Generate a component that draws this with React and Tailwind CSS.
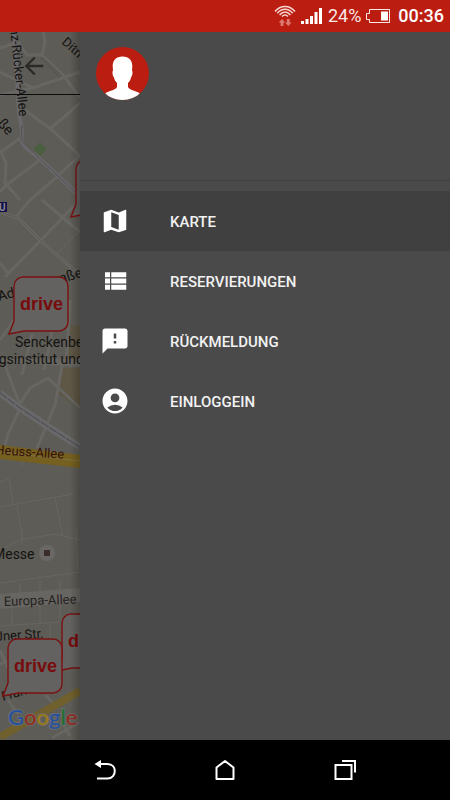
import React, { useState } from 'react';
import { MdArrowBack, MdMap, MdFeedback, MdAccountCircle } from 'react-icons/md';

function ViewListIcon(props) {
    return (
        <svg viewBox="0 0 24 24" fill="currentColor" {...props}>
            <path d="M4 14h4v-4H4v4zm0 5h4v-4H4v4zM4 9h4V5H4v4zm5 5h12v-4H9v4zm0 5h12v-4H9v4zM9 5v4h12V5H9z" />
        </svg>
    );
}

const items = [
    { id: 'map', label: 'KARTE', Icon: MdMap },
    { id: 'reservations', label: 'RESERVIERUNGEN', Icon: ViewListIcon },
    { id: 'feedback', label: 'RÜCKMELDUNG', Icon: MdFeedback },
    { id: 'login', label: 'EINLOGGEIN', Icon: MdAccountCircle },
];

function StatusBar() {
    return (
        <header className="flex h-8 items-center justify-end bg-[#bb1e11] pr-[6px] text-[18px] leading-8 text-[#fbe9e7]">
            <svg className="mr-1 h-6 w-6" viewBox="0 0 24 24" fill="none" stroke="#f6d5d1" strokeWidth="1.5">
                <path d="M2 7.500C7.500 .8 16.500 .8 22 7.500" />
                <path d="M4.300 9.300C8.800 4 15.200 4 19.700 9.300" />
                <path d="M6.600 11C10 7 14 7 17.400 11" />
                <path d="M9 12.600C11 10.500 13 10.500 15 12.600" />
                <g fill="#df7a70" stroke="none">
                    <path d="M9 15l3.300 3.500h-1.900V22H7.600v-3.500H5.700z" />
                    <path d="M15.300 22l-3.300-3.500h1.900V15h2.800v3.500h1.900z" />
                </g>
            </svg>
            <svg className="mr-[6px] h-4 w-[21px]" viewBox="0 0 21 16" fill="#fff">
                <path d="M0 13h3v3H0zM4.500 11h3v5h-3zM9 8h3v8H9zM13.500 4h3v12h-3zM18 0h3v16h-3z" />
            </svg>
            <span>24%</span>
            <svg className="mr-2 ml-[5px] h-[14px] w-6" viewBox="0 0 24 14" fill="none" stroke="#fbe9e7">
                <path d="M3.500 .5H23.500V13.500H3.500V10.500H.500V4.500H3.500Z" />
                <path d="M15 2.500h7v9h-7z" fill="#fff" stroke="none" />
            </svg>
            <span className="font-medium text-white">00:36</span>
        </header>
    );
}

function Pin({ x, y }) {
    return (
        <g transform={`translate(${x} ${y})`}>
            <path
                d="M9 0H45A9 9 0 0 1 54 9V45A9 9 0 0 1 45 54H10L-5 57L0 44V9A9 9 0 0 1 9 0Z"
                fill="#636261"
                stroke="#7a1010"
                strokeWidth="1.4"
            />
            <text x="6" y="33" fontSize="18" fontWeight="700" fill="#780c0c" fontFamily="Liberation Sans, sans-serif">
                drive
            </text>
        </g>
    );
}

function CityMap() {
    return (
        <svg className="block h-[708px] w-20" viewBox="0 32 80 708" fontFamily="Roboto, sans-serif">
            <defs>
                <linearGradient id="edge">
                    <stop offset="0" stopColor="#000" stopOpacity="0" />
                    <stop offset="1" stopColor="#000" stopOpacity="0.22" />
                </linearGradient>
            </defs>
            <rect y="32" width="80" height="708" fill="#5e5c56" />

            {/* blocks and parks */}
            <path d="M33 149L40 142L47 149L40 156Z" fill="#4b5f40" />
            <path d="M62 368H80V410L57 392Z" fill="#5f5746" />
            <path d="M70 325h10v34H68z" fill="#5f5746" />

            {/* side streets */}
            <g fill="none" stroke="#686662" strokeWidth="3">
                <path d="M43 30L45 43L42 55L27 55L18 42M42 55L63 75L80 98" />
                <path d="M18 42L0 48M0 72L33 88L80 72M0 95L33 88" />
                <path d="M25 110L52 130L80 156M50 129L80 103" />
                <path d="M0 153L20 138M0 150L6 163L5 183L20 200" />
                <path d="M58 176L80 155M40 160L5 186L0 192M58 176L30 200L15 218" />
                <path d="M42 200L80 232M5 277L70 210L80 200M0 263L8 273" />
                <path d="M0 340L14 320M32 334L22 375M52 332L44 370M70 300L66 365" />
                <path d="M5 365L20 405M20 404L30 388L48 378L80 408M62 366L55 405L37 448M20 408L8 434L5 446" />
            </g>
            <g fill="none" stroke="#686661" strokeWidth="1">
                <path d="M57 254L80 230" />
                <path d="M0 482L9 479L13 503M0 507L73 494M17 505L23 540M55 498L63 537M22 460V466" />
                <path d="M0 550L20 540L55 534L80 540M22 545V530M20 583V598M40 580V622M60 580V620M0 583L80 572M76 530L78 570" />
                <path d="M0 626L60 622M12 600V625M50 622V640" />
            </g>
            <path d="M0 650L8 668M0 664L8 661M45 695L54 704M8 700L18 714M52 738L80 722M62 722L70 736" fill="none" stroke="#686662" strokeWidth="3" />

            {/* tram and railway */}
            <path d="M14 32L19 113L22 130L21 140L25 147L40 159L58 176L76 193" fill="none" stroke="#68686c" strokeWidth="4" />
            <path d="M22 125L21 140L40 159L58 176L76 193" fill="none" stroke="#54534f" strokeWidth="1" />
            <path d="M0 212L18 218L40 240L57 255L80 275" fill="none" stroke="#6b6a66" strokeWidth="3" />
            <path d="M0 212L18 218L40 240L57 255L80 275" fill="none" stroke="#5a5853" strokeWidth="1" />
            <path d="M40 57L60 78M42 57L62 76" fill="none" stroke="#4d4b45" strokeWidth="0.6" />
            <path d="M0 393L20 408L50 428L80 447" fill="none" stroke="#68686a" strokeWidth="7" />
            <path d="M0 393L20 408L50 428L80 447" fill="none" stroke="#484848" strokeWidth="1" strokeDasharray="9 1" />
            <path d="M0 359H80V367L0 362Z" fill="#686661" />

            {/* main roads */}
            <path d="M0 445L80 455V468L0 459Z" fill="#75601f" />
            <path d="M0 452L80 461" stroke="#7f7040" strokeWidth="1" />
            <path d="M0 594L80 588V602L0 609Z" fill="#686662" />
            <path d="M0 737L80 691" stroke="#6f602e" strokeWidth="8" />

            <g fontSize="14" fill="#141312">
                <text fontSize="13" transform="translate(61 43) rotate(42)">Ditm</text>
                <text fontSize="13" transform="translate(10 28) rotate(84)">nz-Rücker-Allee</text>
                <text fontSize="14" transform="translate(-3 124) rotate(48)">ße</text>
                <text fontSize="14" transform="translate(-1 301) rotate(-14)">Ad</text>
                <text fontSize="14" transform="translate(52 286) rotate(-17)">traße</text>
                <text x="15" y="347">Senckenbe</text>
                <text x="-9" y="364">ngsinstitut und</text>
                <text fontSize="13" fill="#35120b" transform="translate(-5 454) rotate(4)">Heuss-Allee</text>
                <text x="-7" y="559">Messe</text>
                <text fontSize="13" fill="#242220" transform="translate(4 606) rotate(-2)">Europa-Allee</text>
                <text fontSize="13" transform="translate(-4 641) rotate(-4)">Jner Str.</text>
                <text fontSize="13" transform="translate(3 701) rotate(-16)">Fran</text>
            </g>
            <rect x="-4" y="202" width="11" height="10" fill="#10104a" />
            <text x="-1" y="211" fontSize="10" fontWeight="700" fill="#8a8a92">U</text>
            <circle cx="47" cy="553" r="8" fill="#6a6866" />
            <rect x="44" y="550" width="6" height="6" fill="#3a2c28" />

            <Pin x={76} y={160} />
            <Pin x={14} y={277} />
            <Pin x={62} y={614} />
            <Pin x={8} y={639} />

            <text
                x="8"
                y="725"
                fontSize="22"
                fontFamily="Lato, sans-serif"
                fontWeight="500"
                stroke="#6c6b68"
                strokeWidth="2"
                paintOrder="stroke"
            >
                <tspan fill="#2552a0" stroke="#6c6b68">G</tspan>
                <tspan fill="#942a20">o</tspan>
                <tspan fill="#9c7a12">o</tspan>
                <tspan fill="#2552a0">g</tspan>
                <tspan fill="#206e36">l</tspan>
                <tspan fill="#942a20">e</tspan>
            </text>

            <path d="M0 94.500H80" stroke="#0c0c0c" />
            <rect x="70" y="32" width="10" height="708" fill="url(#edge)" />
        </svg>
    );
}

function Avatar() {
    return (
        <svg className="h-[53px] w-[53px]" viewBox="0 0 53 53">
            <clipPath id="avatar">
                <circle cx="26.500" cy="26.500" r="26.500" />
            </clipPath>
            <g clipPath="url(#avatar)">
                <rect width="53" height="53" fill="#bb1e11" />
                <path
                    d="M26.500 9.500C33 9.500 36.300 13.500 36.300 19L36 23.500C37 24.500 36.500 28.500 35 30.500C34.500 33 33.500 34.500 32 36V40C33 43 39 43.500 43.500 46V53H9.500V46C14 43.500 20 43 21 40V36C19.500 34.500 18.500 33 18 30.500C16.500 28.500 16 24.500 17 23.500L16.700 19C16.700 13.500 20 9.500 26.500 9.500Z"
                    fill="#fff"
                />
            </g>
        </svg>
    );
}

function Drawer() {
    const [selected, setSelected] = useState('map');

    return (
        <aside className="flex-1 bg-[#4a4a4a]">
            <div className="h-[149px] border-b border-[#3f3f3f] px-4 pt-[15px]">
                <Avatar />
            </div>
            <nav className="pt-[10px]">
                {items.map(({ id, label, Icon }) => (
                    <button
                        key={id}
                        type="button"
                        onClick={() => setSelected(id)}
                        className={`flex h-[60px] w-full items-center gap-10 px-5 text-left text-[15px] font-medium text-[#f2f2f2] ${selected === id ? 'bg-[#404040]' : ''}`}
                    >
                        <Icon className="h-[30px] w-[30px] text-white" />
                        <span className="pt-[2px]">{label}</span>
                    </button>
                ))}
            </nav>
        </aside>
    );
}

function NavBar() {
    return (
        <footer className="grid h-[60px] grid-cols-3 bg-black px-[10%] text-white">
            <button type="button" aria-label="Zurück" className="flex items-center justify-center">
                <svg className="h-6 w-6" viewBox="0 0 24 24" fill="none" stroke="currentColor" strokeWidth="2">
                    <path d="M6 6H14.500C19.500 6 21.800 9.500 21.800 13S19.500 20.500 14.500 20.500H4" />
                    <path d="M1.500 6L8 2V10Z" fill="currentColor" stroke="none" />
                </svg>
            </button>
            <button type="button" aria-label="Startseite" className="flex items-center justify-center">
                <svg className="h-6 w-6" viewBox="0 0 24 24" fill="none" stroke="currentColor" strokeWidth="2">
                    <path d="M3.500 9.500L12 3L20.500 9.500V21H3.500Z" strokeLinejoin="round" />
                </svg>
            </button>
            <button type="button" aria-label="Letzte Apps" className="flex items-center justify-center">
                <svg className="h-6 w-6" viewBox="0 0 24 24" fill="none" stroke="currentColor" strokeWidth="2">
                    <path d="M2.500 7H18.500V21H2.500Z" />
                    <path d="M9 3H22V14.500" />
                </svg>
            </button>
        </footer>
    );
}

export default function App() {
    return (
        <div className="flex min-h-screen flex-col bg-black font-[Roboto,sans-serif]">
            <StatusBar />
            <main className="flex flex-1 bg-[#4a4a4a]">
                <section className="relative w-20 overflow-hidden">
                    <CityMap />
                    <button type="button" aria-label="Menü schließen" className="absolute top-5 left-5 text-[#2b2a29]">
                        <MdArrowBack className="h-7 w-7" />
                    </button>
                </section>
                <Drawer />
            </main>
            <NavBar />
        </div>
    );
}
